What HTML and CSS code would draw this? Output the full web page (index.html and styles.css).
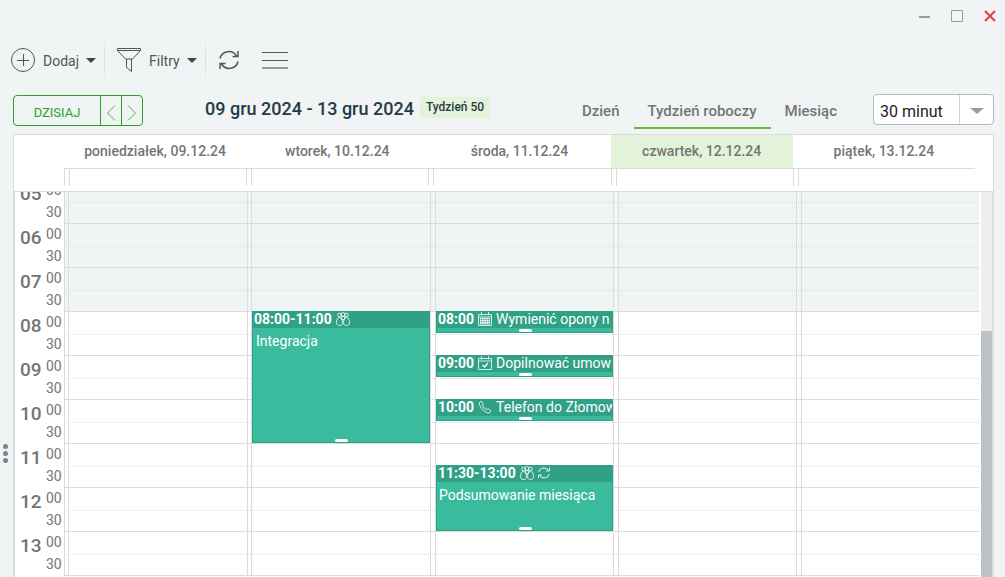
FILE: index.html
```html
<!DOCTYPE html>
<html lang="pl">
<head>
<meta charset="utf-8">
<title>Kalendarz</title>
<link rel="stylesheet" href="styles.css">
</head>
<body>
<svg class="sprite" aria-hidden="true">
  <symbol id="people" viewBox="0 0 14 14"><g fill="none" stroke="currentColor" stroke-width=".8"><circle cx="3.500" cy="3" r="1.800"/><circle cx="10.500" cy="3" r="1.800"/><circle cx="7" cy="2.500" r="2"/><circle cx="7" cy="6" r="1.800"/><path d="M3.500 5C1.200 6 .5 8 .5 10.500c0 2 1 3 3 3s3-1 3-3C6.500 8 5.500 6 3.500 5zM10.500 5c2.300 1 3 3 3 5.500 0 2-1 3-3 3s-3-1-3-3c0-2.500 1-4.500 3-5.500z"/></g></symbol>
  <symbol id="calendar" viewBox="0 0 14 14"><g fill="none" stroke="currentColor" stroke-width=".8"><path d="M.5 2.500h13v11H.5zM.5 5h13M3.500 0v3.500M10.500 0v3.500M2.500 6.500h9M2.500 8.500h9M2.500 10.500h9M2.500 12h9M2.500 6.500V12M4.800 6.500V12M7 6.500V12M9.200 6.500V12M11.500 6.500V12"/></g></symbol>
  <symbol id="task" viewBox="0 0 14 14"><g fill="none" stroke="currentColor" stroke-width=".8"><path d="M.5 2.500h13v11H.5zM.5 5h13M3.500 0v3.500M10.500 0v3.500"/><path stroke-width="1.200" d="M4.500 9l2 2 3.500-4"/></g></symbol>
  <symbol id="phone" viewBox="0 0 14 14"><path fill="none" stroke="currentColor" stroke-width=".8" d="M1.500 2.500L3 1l2.500 3-1.200 1.700c1 1.700 2.300 3 4 4L10 8.500l3 2.500-1.500 1.700c-1.500.8-4-.2-6.500-2.700S.7 4 1.500 2.500z"/></symbol>
  <symbol id="repeat" viewBox="0 0 20 20"><path fill="none" stroke="currentColor" stroke-width="1.500" d="M1 8.500A9 9 0 0 1 17.500 6M19 1v5.500h-5.500M19 11.500A9 9 0 0 1 2.500 14M1 19v-5.500h5.500"/></symbol>
</svg>
<div class="app">
  <header class="window-bar">
    <button class="win" aria-label="Minimalizuj"><svg width="12" height="12"><path d="M1 7h11" stroke="#93a1a6" stroke-width="2"/></svg></button>
    <button class="win" aria-label="Maksymalizuj"><svg width="12" height="12"><path d="M.5.5h11v11H.5z" fill="none" stroke="#93a1a6"/></svg></button>
    <button class="win" aria-label="Zamknij"><svg width="12" height="12"><path d="M1 1l10 10M11 1L1 11" stroke="#e5393f" stroke-width="2"/></svg></button>
  </header>
  <nav class="toolbar">
    <button class="tool"><svg width="24" height="24" fill="none" stroke="#555"><circle cx="12" cy="12" r="11.500"/><path d="M6 12.500h12M12.500 6v12"/></svg><span class="tool-label">Dodaj</span><i class="caret"></i></button>
    <span class="separator"></span>
    <button class="tool"><svg width="24" height="24" fill="none" stroke="#555"><path d="M.5.500h23v2l-8 8.500h-7L.5 2.500zM1 2.500h22M9.500 11v8.500l5 4V11"/></svg><span class="tool-label">Filtry</span><i class="caret"></i></button>
    <span class="separator"></span>
    <button class="tool refresh" aria-label="Odśwież"><svg width="20" height="20" color="#555"><use href="#repeat"/></svg></button>
    <button class="tool menu" aria-label="Menu"><svg width="28" height="18" stroke="#555"><path d="M1 1.500h26M1 9.500h26"/><path d="M1 17h26" stroke="#999" stroke-width="2"/></svg></button>
  </nav>
  <div class="controls">
    <div class="pager">
      <button class="today">DZISIAJ</button>
      <button class="step" aria-label="Poprzedni"><svg width="10" height="16"><path d="M9 .5L1.500 8 9 15.500" fill="none" stroke="currentColor" stroke-width=".8"/></svg></button>
      <button class="step" aria-label="Następny"><svg width="10" height="16"><path d="M1 .5L8.500 8 1 15.500" fill="none" stroke="currentColor" stroke-width=".8"/></svg></button>
    </div>
    <h1 class="range">09 gru 2024 - 13 gru 2024</h1>
    <span class="badge">Tydzień 50</span>
    <div class="tabs" role="tablist">
      <button class="tab" role="tab">Dzień</button>
      <button class="tab active" role="tab" aria-selected="true">Tydzień roboczy</button>
      <button class="tab" role="tab">Miesiąc</button>
    </div>
    <div class="picker">
      <select class="interval" aria-label="Interwał"><option>30 minut</option></select>
      <span class="picker-arrow"><i class="picker-caret"></i></span>
    </div>
  </div>
  <main class="calendar">
    <div class="days">
      <div class="day">poniedziałek, 09.12.24</div>
      <div class="day">wtorek, 10.12.24</div>
      <div class="day">środa, 11.12.24</div>
      <div class="day current">czwartek, 12.12.24</div>
      <div class="day">piątek, 13.12.24</div>
    </div>
    <div class="allday"><div class="slot"></div><div class="slot"></div><div class="slot"></div><div class="slot"></div><div class="slot"></div></div>
    <div class="body">
      <div class="hours">
        <div class="hour"><b>05</b><span>00</span><span>30</span></div>
        <div class="hour"><b>06</b><span>00</span><span>30</span></div>
        <div class="hour"><b>07</b><span>00</span><span>30</span></div>
        <div class="hour"><b>08</b><span>00</span><span>30</span></div>
        <div class="hour"><b>09</b><span>00</span><span>30</span></div>
        <div class="hour"><b>10</b><span>00</span><span>30</span></div>
        <div class="hour"><b>11</b><span>00</span><span>30</span></div>
        <div class="hour"><b>12</b><span>00</span><span>30</span></div>
        <div class="hour"><b>13</b><span>00</span><span>30</span></div>
      </div>
      <div class="grid">
        <div class="rows">
          <div class="row off"></div><div class="row off"></div><div class="row off"></div>
          <div class="row"></div><div class="row"></div><div class="row"></div><div class="row"></div><div class="row"></div><div class="row"></div>
        </div>
        <div class="columns">
          <div class="column"></div>
          <div class="column">
            <article class="event from-8 long"><h2 class="event-head"><b>08:00-11:00</b><svg class="icon"><use href="#people"/></svg></h2><p class="event-text">Integracja</p></article>
          </div>
          <div class="column">
            <article class="event from-8 short"><h2 class="event-head"><b>08:00</b><svg class="icon"><use href="#calendar"/></svg>Wymienić opony n</h2></article>
            <article class="event from-9 short"><h2 class="event-head"><b>09:00</b><svg class="icon"><use href="#task"/></svg>Dopilnować umow</h2></article>
            <article class="event from-10 short"><h2 class="event-head"><b>10:00</b><svg class="icon"><use href="#phone"/></svg>Telefon do Złomow</h2></article>
            <article class="event from-11-30 medium"><h2 class="event-head"><b>11:30-13:00</b><svg class="icon"><use href="#people"/></svg><svg class="icon small"><use href="#repeat"/></svg></h2><p class="event-text">Podsumowanie miesiąca</p></article>
          </div>
          <div class="column"></div>
          <div class="column"></div>
        </div>
      </div>
      <div class="scrollbar"><div class="thumb"></div></div>
    </div>
  </main>
  <div class="handle" aria-hidden="true"><i></i><i></i><i></i></div>
</div>
</body>
</html>
```

FILE: styles.css
```css
* { box-sizing: border-box; }
body { margin: 0; background: #f0f4f5; color: #555; font: 14px/20px Roboto, "Liberation Sans", sans-serif; }
button { margin: 0; padding: 0; border: 0; background: none; color: inherit; font: inherit; }
svg { display: block; flex: none; }
.sprite { position: absolute; width: 0; height: 0; }
.app { position: relative; display: flex; flex-direction: column; height: 100vh; overflow: hidden; }

.window-bar { display: flex; justify-content: flex-end; align-items: center; gap: 21px; height: 34px; padding: 0 9px 2px 0; flex: none; }
.toolbar { display: flex; align-items: center; height: 52px; padding-left: 11px; flex: none; }
.tool { display: flex; align-items: center; gap: 7px; }
.tool-label { padding: 2px 0 0 1px; }
.caret { border: 5px solid transparent; border-top-color: #444; border-bottom: 0; }
.separator { width: 1px; height: 48px; margin: 0 12px 0 8px; background: linear-gradient(transparent, #d8dcdd, transparent); }
.refresh { margin-left: 1px; }
.menu { margin-left: 22px; }

.controls { display: flex; align-items: flex-start; padding: 8px 11px 0 13px; height: 48px; flex: none; }
.pager { display: flex; height: 31px; margin-top: 1px; border: 1px solid #2f9e2a; border-radius: 4px; color: #2f9e2a; }
.today { width: 86px; padding-top: 4px; font-size: 13px; }
.step { display: flex; align-items: center; justify-content: center; width: 21px; padding-top: 4px; border-left: 1px solid #2f9e2a; }
.range { margin: 5px 6px 0 62px; color: #263a45; font-size: 18px; line-height: 20px; font-weight: 500; white-space: nowrap; }
.badge { height: 21px; margin-top: 3px; padding: 0 6px; background: #e3f3da; color: #263a45; font-size: 12px; font-weight: 500; white-space: nowrap; }
.tabs { display: flex; margin-left: auto; margin-right: 22px; }
.tab { height: 35px; padding: 0 14px; border-bottom: 2px solid transparent; color: #757575; font-size: 15px; font-weight: 500; white-space: nowrap; }
.tab.active { border-color: #67b93a; }
.picker { position: relative; width: 121px; height: 31px; }
.interval { width: 100%; height: 31px; margin: 0; padding: 4px 40px 0 6px; border: 1px solid #b3b8ba; border-radius: 4px; background: #fff; color: #222; font: 16px Roboto, "Liberation Sans", sans-serif; appearance: none; }
.picker-arrow { position: absolute; top: 1px; right: 1px; bottom: 1px; width: 34px; display: grid; place-items: center; border-left: 1px solid #d0d3d4; pointer-events: none; }
.picker-caret { margin-top: 2px; border: 7px solid transparent; border-top: 6px solid #93a1a6; border-bottom: 0; }

.calendar { display: flex; flex-direction: column; flex: 1; min-height: 0; margin: 0 11px 0 13px; border: 1px solid #dadcdc; border-bottom: 0; background: #fff; }
.days, .allday { display: grid; grid-template-columns: repeat(5, minmax(0, 1fr)); margin: 0 18px 0 50px; flex: none; }
.days { height: 33px; }
.day { overflow: hidden; padding-top: 6px; color: #757575; font-weight: 500; text-align: center; white-space: nowrap; }
.current { background: #e3f3da; }
.allday { height: 18px; margin-bottom: 5px; border-top: 1px solid #dadcdc; }
.slot { border-left: 1px solid #dadcdc; }
.slot::before { content: ""; display: block; width: 4px; height: 17px; border-right: 1px solid #dadcdc; }
.body { display: flex; flex: 1; min-height: 0; overflow: hidden; border: 1px solid #dadcdc; border-width: 1px 1px 0; }
.hours { width: 49px; margin-top: -13px; flex: none; }
.hour { display: grid; grid-template: 22px 22px / 26px 18px; padding-left: 5px; height: 44px; color: #757575; }
.hour b { grid-row: span 2; font-size: 19px; line-height: 30px; font-weight: 500; }
.hour span { line-height: 22px; }
.grid { display: grid; flex: 1; min-width: 0; margin-top: -13px; height: 397px; }
.rows, .columns { grid-area: 1 / 1; }
.rows { padding-top: 1px; }
.row { height: 44px; border-bottom: 1px solid #dadcdc; }
.row::before { content: ""; display: block; height: 22px; border-bottom: 1px dotted #dddfe0; }
.off { background: #f0f4f5; }
.columns { display: grid; grid-template-columns: repeat(5, minmax(0, 1fr)); }
.column { display: grid; grid-template-rows: repeat(18, 22px); grid-template-columns: minmax(0, 1fr); padding-left: 4px; border-left: 1px solid #dadcdc; background: linear-gradient(#dadcdc, #dadcdc) 3px 0 / 1px 100% no-repeat; }
.column:nth-child(n + 3) { padding-left: 5px; background-position: 4px 0; }
.event { position: relative; grid-column: 1; overflow: hidden; border: 1px solid #30a086; background: #3abb9d; color: #fff; }
.event::after { content: ""; position: absolute; bottom: 0; left: 50%; width: 13px; height: 3px; margin-left: -6px; border-radius: 2px; background: #fff; }
.event-head { display: flex; align-items: center; gap: 4px; height: 16px; margin: 0; padding: 0 0 2px 1px; overflow: hidden; background: #30a086; font-size: 14px; line-height: 14px; font-weight: 400; white-space: nowrap; }
.event-head b { font-weight: 700; }
.event-text { margin: 3px; }
.medium .event-text { margin-left: 2px; }
.icon { width: 14px; height: 14px; }
.small { width: 12px; height: 12px; }
.from-8 { grid-row-start: 7; }
.from-9 { grid-row-start: 9; }
.from-10 { grid-row-start: 11; }
.from-11-30 { grid-row-start: 14; }
.long { grid-row-end: span 6; }
.medium { grid-row-end: span 3; }
.short { grid-row-end: span 1; }
.scrollbar { display: flex; flex-direction: column; justify-content: flex-end; width: 11px; margin-left: 2px; background: #eee; }
.thumb { height: 64%; background: #bcc1c5; }

.handle { position: absolute; left: 3px; bottom: 114px; display: grid; gap: 2px; }
.handle i { width: 5px; height: 5px; border-radius: 50%; background: #78878d; }
```
